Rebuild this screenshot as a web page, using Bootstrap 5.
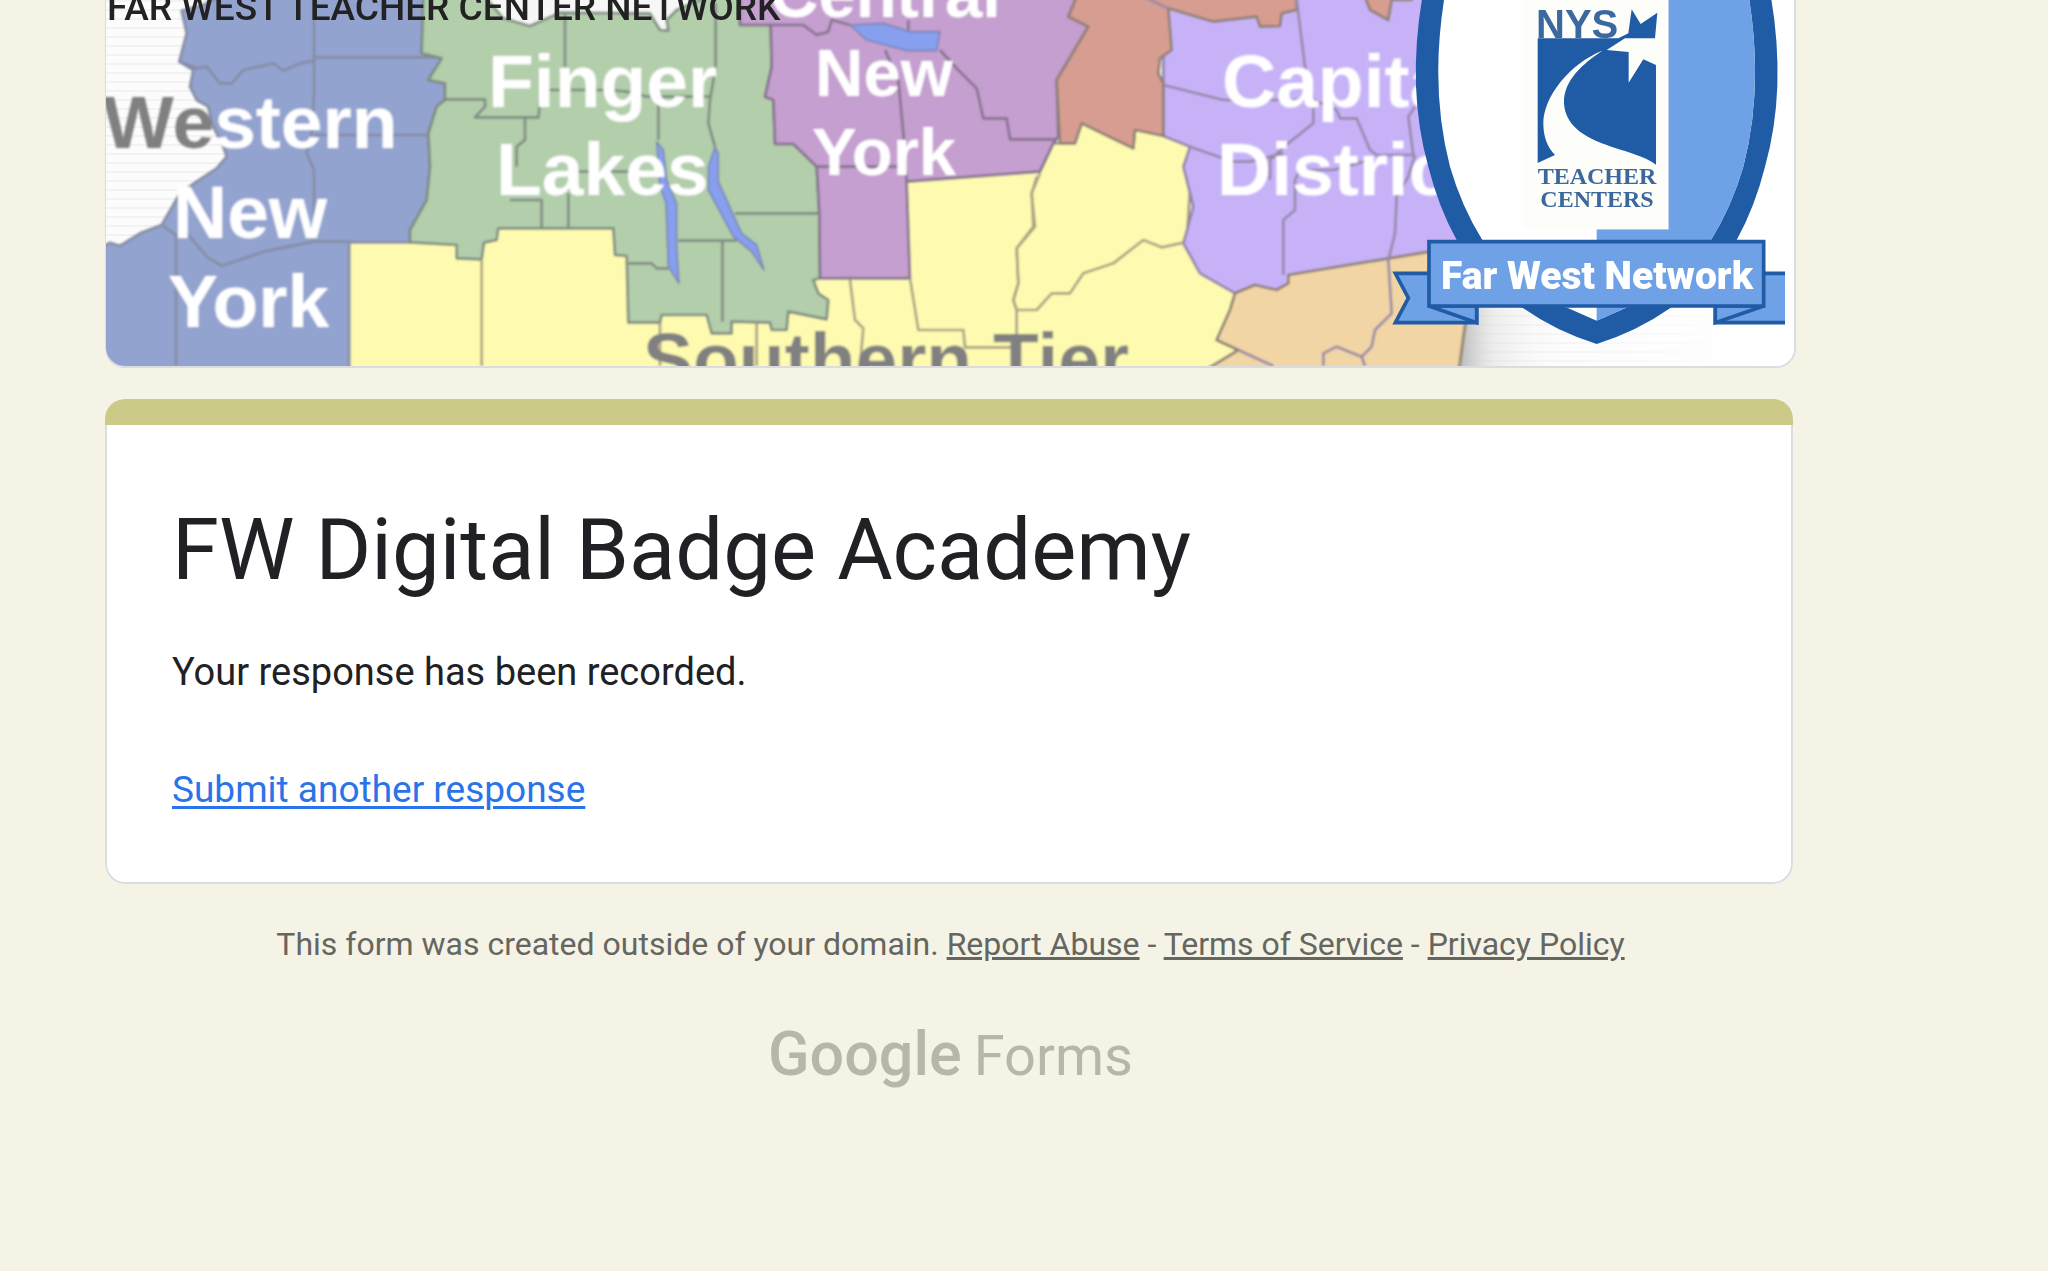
<!DOCTYPE html>
<html lang="en">
<head>
<meta charset="utf-8">
<meta name="viewport" content="width=device-width, initial-scale=1">
<title>FW Digital Badge Academy</title>
<link href="https://cdn.jsdelivr.net/npm/bootstrap@5.3.0/dist/css/bootstrap.min.css" rel="stylesheet">
<style>
  body { background: #f5f3e6; font-family: Roboto, Arial, sans-serif; color: #202124; }
  .form-page { padding: 0 252px 48px 105px; }
  .banner { border: 2px solid #dadce0; border-top: 0; border-left-width: 1px; border-radius: 0 0 20px 20px; overflow: hidden; background: #fff; }
  .banner svg { display: block; width: 100%; height: 366px; }
  .form-card { margin: 31px 3px 0 0; border: 0; border-radius: 20px; overflow: hidden; }
  .form-stripe { height: 26px; background: #cbca87; }
  .form-content { padding: 69px 65px 66px; border: 2px solid #dadce0; border-top: 0; border-radius: 0 0 20px 20px; }
  .form-title { font-size: 85px; line-height: 112px; font-weight: 400; margin: 0 0 40px; }
  .form-message { font-size: 38px; line-height: 52px; margin: 0 0 66px; }
  .form-again { font-size: 37px; line-height: 52px; color: #2b73e8; text-underline-offset: 4px; text-decoration-thickness: 3px; }
  .form-foot { font-size: 32px; line-height: 44px; color: #666660; margin-top: 38px; }
  .form-foot a { color: inherit; }
  .forms-logo { color: #b6b6aa; line-height: 72px; margin-top: 52px; }
  .forms-logo a { color: inherit; text-decoration: none; gap: 12px; }
  .logo-google { font-size: 61px; font-weight: 500; }
  .logo-product { font-size: 56px; }
  .map-label { font: bold 75px "Liberation Sans", Arial, sans-serif; fill: #fff; }
  .map-label-sm { font: bold 67px "Liberation Sans", Arial, sans-serif; fill: #fff; }
  .map-grey { fill: #808080; }
  .map-title { font: 500 37px Roboto, sans-serif; fill: #222; }
  .ribbon-text { font: 900 39px Roboto, sans-serif; fill: #fff; }
  .nys-text { font: bold 40px "Liberation Sans", sans-serif; fill: #3a689f; }
  .centers-text { font: bold 24px "Liberation Serif", serif; fill: #3c679c; }
</style>
</head>
<body>
<main class="form-page">
  <div class="banner">
    <svg viewBox="106 0 1688 366" preserveAspectRatio="xMidYMax slice" role="img" aria-label="Far West Teacher Center Network">
      <defs>
        <pattern id="lines" width="20" height="9" patternUnits="userSpaceOnUse"><rect width="20" height="9" fill="#fcfcfc"/><rect width="20" height="2" fill="#f3f3f3"/></pattern>
        <linearGradient id="shade"><stop offset="0" stop-color="#bbb"/><stop offset=".3" stop-color="#ddd" stop-opacity=".5"/><stop offset="1" stop-color="#fff" stop-opacity="0"/></linearGradient>
        <linearGradient id="fade"><stop offset="0" stop-color="#fff" stop-opacity="0"/><stop offset="1" stop-color="#fff"/></linearGradient>
        <filter id="soft" x="0" y="0" width="100%" height="100%"><feGaussianBlur stdDeviation=".8"/></filter>
        <clipPath id="field"><path d="M222 0Q180 270 240 500Q275 620 337 720Q440 880 595 925L680 962L765 925Q920 880 1023 720Q1085 620 1120 500Q1180 270 1138 0Z"/></clipPath>
      </defs>
      <rect x="105" width="1691" height="366" fill="url(#lines)"/>
      <rect x="1460" y="290" width="110" height="76" fill="url(#shade)"/>
      <rect x="1520" width="230" height="366" fill="url(#fade)"/>
      <rect x="1749" width="47" height="366" fill="#fff"/>
      <g filter="url(#soft)" stroke-linejoin="round">
        <!-- Southern Tier -->
        <g transform="translate(560) scale(.33333)" stroke="#99917f" stroke-width="8">
          <path fill="#fefbb1" d="M-635 1120V650L1040 500L1440 515L1480 430L1545 430L1565 370L1720 445L1725 390L1900 408L1880 730L2025 880L2010 930L1970 1020L2035 1050L1930 1120Z"/>
        </g>
        <!-- Western New York -->
        <g transform="translate(90) scale(.33333)" stroke="#858da3" stroke-width="8">
          <path fill="#93a3cf" d="M390-10L340 15L275 32L290 100L268 185L310 210L300 260L320 300L355 320L365 370L400 440L410 470L380 505L320 545L270 580L215 675L150 700L90 738L60 728L35 742V1120H778V727H960V690L1010 600L1020 500L1015 400L1040 320L1065 300V250L1015 240L1055 175L995 160L1000-10Z"/>
          <path fill="none" d="M268 185L320 205L350 200L390 250H425L460 210L550 190L580 212L630 190L670 182M672-10V280L665 400L650 460L672 510V715M672 172H1055M672 405H1015M215 675L258 705V1098M258 705H295L350 770L395 798L520 755L670 725H775"/>
        </g>
        <!-- Finger Lakes and Central New York -->
        <g transform="translate(560) scale(.33333)" stroke="#7f8c81" stroke-width="8">
          <path fill="#b2ceab" d="M-410-10L-415 160L-355 175L-395 240L-345 250V300L-370 320L-395 400L-390 500L-400 600L-450 690V727L-310 735V775L-235 778L-228 728L-190 720L-185 685H160L165 765L200 768L205 968H300L305 945H440L455 1000H515V965L630 968L635 990H680L685 935L800 958L805 900L775 880L760 840L780 835L778 640L770 500L700 432H645L640 300L615 290L635 200L632 75H540V-10Z"/>
          <path fill="#f7f7f7" d="M-225-10L-170 55L-90 78L-50 60L0 38L270 40L300 90L325 92L320 60L350 30L440-10Z"/>
          <path fill="none" d="M15 40V200M467 10V200L450 300L445 370L465 440M-345 298H-225L-225 320L-255 352H-65L-55 270H150L200 275L260 290H450M295 300V420M-105 352V420L-130 440V500M-150 600H-55V685M25 580V685M30 515H210M525 640H775M355 722H530M487 725V965M205 790H275L290 805H325"/>
          <path fill="#c49fcf" stroke="#85728d" d="M540-10V75L632 75L635 200L615 290L640 300L645 432H700L770 500L778 640L780 835H1050L1040 545L1440 515L1480 430L1495 410L1490 240L1585 80L1525 50L1550-10Z"/>
          <path fill="none" stroke="#85728d" d="M632 75H730L770 105L805 95L815 60L870 75M1045 60V90M1140 150L1190 205L1250 265L1270 355H1340L1350 418H1490M975 150L1015 240L1030 400L1040 545M770 500H1030"/>
          <g fill="#879fef" stroke="#7b86b1" stroke-width="5">
            <path d="M870 75L970 70L1050 95H1140L1130 152H1040L920 120Z"/>
            <path d="M290 425L310 450L320 540L350 610V740L357 850L325 800L318 610L300 560Z"/>
            <path d="M465 440L475 460V545L545 700L590 735L612 810L575 755L520 710L445 570V500Z"/>
          </g>
          <path fill="none" stroke="#aaa183" d="M-235 778V1098M870 840L885 960L910 985L900 1098M1050 835L1075 990H1210L1215 1042H1370M1430 530L1415 580L1420 680L1370 745L1375 850L1360 900L1370 930V1098M300 968V1098M590 968V1098"/>
        </g>
        <!-- Mohawk, Capital District and Hudson Valley -->
        <g transform="translate(1000) scale(.33333)" stroke="#8e8075" stroke-width="8">
          <path fill="#c7b2f8" stroke="#9183a7" d="M490-10V408L570 440L550 500L580 620L550 730L600 820L705 880L765 855L830 870L865 850V825L1290 755L1500 720V-10Z"/>
          <path fill="#d79d91" d="M230-10L205 50L265 80L170 240L180 430H225L245 370L400 445L405 390L490 408V250L475 220L480 175L515 150L505 25L640 65L770 50L780 80L840 78L845 40L890 30V-10Z"/>
          <path fill="#d79d91" d="M1095-10L1110 30L1165 60L1175 0H1235V-10Z"/>
          <path fill="#f2d5a5" d="M705 880L765 855L830 870L865 850V825L1290 755L1500 720L1395 975L1375 1120H600L715 1050L650 1020L690 930Z"/>
          <path fill="none" stroke="#9588a5" d="M890 0L915 200L940 300V370L865 430L810 480V540M490 255L670 300L940 300L1010 330L1020 355H1070L1110 450L1130 465H1240L1225 350L1245 320M570 440L700 485H750L850 460M1110 480L1000 510H900L885 540V630L850 660V825M1245 465L1225 530L1190 590L1185 700L1165 780L1175 940L1125 990L1115 1040L1085 1070L1010 1040L970 1060V1098M1085 1070L1095 1098M715 1050L820 1098M430-10L505 25"/>
          <path fill="none" stroke="#aaa183" d="M120 520L95 580L105 680L50 745L55 850L40 900L50 930H110L155 880H210L250 820L340 790L430 720L485 742L550 728"/>
        </g>
        <g class="map-label">
          <text x="103" y="148"><tspan class="map-grey">We</tspan>stern</text>
          <text x="173" y="238">New</text><text x="168" y="327">York</text>
          <text x="488" y="107">Finger</text><text x="496" y="195">Lakes</text>
          <text x="1222" y="107">Capital</text><text x="1217" y="195">District</text>
          <text x="643" y="385" class="map-grey">Southern Tier</text>
        </g>
        <g class="map-label-sm"><text x="770" y="17">Central</text><text x="815" y="96">New</text><text x="812" y="175">York</text></g>
      </g>
      <text x="107" y="20" class="map-title">FAR WEST TEACHER CENTER NETWORK</text>
      <!-- Shield -->
      <g transform="translate(1370) scale(.33333)">
        <path fill="#205ba5" d="M157-10Q110 270 175 500Q205 620 260 720Q340 850 460 925Q560 995 680 1032Q800 995 900 925Q1020 850 1100 720Q1155 620 1185 500Q1250 270 1203-10Z"/>
        <g clip-path="url(#field)"><path fill="#fff" d="M0 0H1360V1000H0Z"/><path fill="#6ea1e6" d="M895 0H1360V1000H680V688H895Z"/><path fill="#fdfefa" d="M460 0H895V688H460Z"/></g>
        <path fill="#205ba5" d="M503 115H745L775 100L785 28L812 72L862 38L855 115H765L710 150L776 156V248L820 178L858 195V494C790 440 590 440 582 310C580 240 640 190 697 152C600 190 520 290 520 370Q520 430 555 465L503 489Z"/>
        <g fill="#6ea1e6" stroke="#205ba5" stroke-width="11">
          <path d="M76 820H320V968H76L115 894Z"/><path d="M1245 820H1036V968H1245"/>
          <path d="M177 918L320 968V918ZM1181 918L1036 968V918Z"/><path d="M177 725H1181V918H177Z"/>
        </g>
      </g>
      <text x="1536" y="38" class="nys-text">NYS</text>
      <text x="1597" y="184" text-anchor="middle" class="centers-text">TEACHER</text>
      <text x="1597" y="207" text-anchor="middle" class="centers-text">CENTERS</text>
      <text x="1597" y="289" text-anchor="middle" class="ribbon-text">Far West Network</text>
    </svg>
  </div>

  <section class="card form-card">
    <div class="form-stripe"></div>
    <div class="form-content">
      <h1 class="form-title">FW Digital Badge Academy</h1>
      <p class="form-message">Your response has been recorded.</p>
      <a class="form-again d-inline-block" href="#">Submit another response</a>
    </div>
  </section>

  <footer class="text-center">
    <p class="form-foot mb-0">This form was created outside of your domain. <a href="#">Report Abuse</a> - <a href="#">Terms of Service</a> - <a href="#">Privacy Policy</a></p>
    <div class="forms-logo"><a class="d-inline-flex align-items-baseline" href="#"><span class="logo-google">Google</span><span class="logo-product">Forms</span></a></div>
  </footer>
</main>
<script src="https://cdn.jsdelivr.net/npm/bootstrap@5.3.0/dist/js/bootstrap.bundle.min.js"></script>
</body>
</html>
